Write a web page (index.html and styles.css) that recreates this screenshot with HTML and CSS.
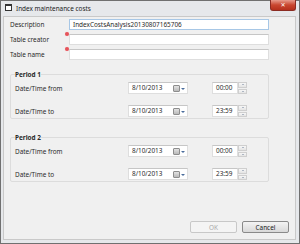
FILE: index.html
```html
<!DOCTYPE html>
<html lang="en">
<head>
    <meta charset="UTF-8">
    <title>Index maintenance costs</title>
    <link rel="stylesheet" href="styles.css">
</head>
<body>
    <div class="window">
        <div class="titlebar">
            <span class="app-icon"></span>
            <span class="title">Index maintenance costs</span>
            <span class="close">&#x2715;</span>
        </div>

        <div class="client">
            <div class="form">
                <span class="label">Description</span>
                <div class="field"><div class="text focus">IndexCostsAnalysis20130807165706</div></div>
                <span class="label">Table creator</span>
                <div class="field"><span class="req"></span><div class="text"></div></div>
                <span class="label">Table name</span>
                <div class="field"><span class="req"></span><div class="text"></div></div>
            </div>

            <fieldset class="period">
                <legend>Period 1</legend>
                <div class="dt-row">
                    <span class="label">Date/Time from</span>
                    <div class="date">8/10/2013<span class="cal"></span><span class="arrow"></span></div>
                    <div class="time">00:00</div>
                    <div class="spin"><span class="up"></span><span class="down"></span></div>
                </div>
                <div class="dt-row">
                    <span class="label">Date/Time to</span>
                    <div class="date">8/10/2013<span class="cal"></span><span class="arrow"></span></div>
                    <div class="time">23:59</div>
                    <div class="spin"><span class="up"></span><span class="down"></span></div>
                </div>
            </fieldset>

            <fieldset class="period">
                <legend>Period 2</legend>
                <div class="dt-row">
                    <span class="label">Date/Time from</span>
                    <div class="date">8/10/2013<span class="cal"></span><span class="arrow"></span></div>
                    <div class="time">00:00</div>
                    <div class="spin"><span class="up"></span><span class="down"></span></div>
                </div>
                <div class="dt-row">
                    <span class="label">Date/Time to</span>
                    <div class="date">8/10/2013<span class="cal"></span><span class="arrow"></span></div>
                    <div class="time">23:59</div>
                    <div class="spin"><span class="up"></span><span class="down"></span></div>
                </div>
            </fieldset>

            <div class="buttons">
                <button class="btn" disabled>OK</button>
                <button class="btn">Cancel</button>
            </div>
        </div>
    </div>
</body>
</html>
```

FILE: styles.css
```css
body {
    margin: 0;
    font-family: "Noto Sans", "DejaVu Sans", sans-serif;
    font-size: 6.4px;
    color: #2a2a2a;
}
.window {
    width: 300px;
    height: 244px;
    box-sizing: border-box;
    border: 1px solid #707070;
    background-color: #e6e8eb;
    padding: 0 3px 3px 2px;
    display: flex;
    flex-direction: column;
}
.titlebar {
    height: 15px;
    display: flex;
    align-items: flex-start;
}
.app-icon {
    width: 5px;
    height: 4px;
    margin: 3px 4px 0 2px;
    border: 1px solid #333;
    border-top-width: 2px;
    background-color: #fff;
}
.title {
    margin-top: 3px;
    line-height: 9px;
    color: #222;
}
.close {
    margin-left: auto;
    margin-top: -1px;
    width: 24px;
    height: 10px;
    border: 1px solid #8b2b22;
    border-top: none;
    border-radius: 0 0 3px 3px;
    background: linear-gradient(#e79b8c, #c9462f 50%, #b5301c);
    color: #fff;
    font-size: 6px;
    line-height: 10px;
    text-align: center;
    font-weight: bold;
}
.client {
    flex: 1;
    border: 1px solid #c9c9c9;
    background-color: #f0f0f0;
    display: flex;
    flex-direction: column;
}
.form {
    display: grid;
    grid-template-columns: 59px 200px;
    row-gap: 4px;
    padding: 2px 0 0 6px;
    align-items: center;
}
.field {
    position: relative;
}
.text, .date, .time {
    height: 11px;
    box-sizing: border-box;
    border: 1px solid #dedede;
    border-top-color: #c6c6c6;
    background-color: #fff;
    line-height: 9px;
    padding-left: 3px;
}
.text.focus {
    border-color: #a7c7e6;
}
.req {
    position: absolute;
    left: -4px;
    top: -2px;
    width: 4px;
    height: 4px;
    border-radius: 50%;
    background-color: #e5535a;
    box-shadow: 0 0 1px #f6b5b8;
}
.period {
    margin: 10px 26px 0 6px;
    padding: 3px 0 1px 4px;
    border: 1px solid #dcdcdc;
    border-radius: 2px;
    min-width: 0;
}
.period + .period {
    margin-top: 14px;
}
.period legend {
    padding: 0;
    font-weight: bold;
    line-height: 9px;
}
.dt-row {
    display: flex;
    align-items: center;
    height: 12px;
    margin-bottom: 11px;
}
.dt-row:last-child {
    margin-bottom: 0;
}
.dt-row .label {
    width: 113px;
}
.date {
    width: 60px;
    height: 12px;
    display: flex;
    align-items: center;
    line-height: 10px;
}
.cal {
    margin-left: auto;
    width: 5px;
    height: 5px;
    border: 1px solid #8d8d8d;
    border-radius: 1px;
    background: linear-gradient(#e2e2e2, #b9b9b9);
}
.arrow {
    margin: 1px 2px 0 1px;
    border-left: 2px solid transparent;
    border-right: 2px solid transparent;
    border-top: 2px solid #4a6d9c;
}
.time {
    width: 26px;
    height: 12px;
    margin-left: 24px;
    line-height: 10px;
}
.spin {
    width: 9px;
    height: 12px;
    display: flex;
    flex-direction: column;
    gap: 1px;
}
.spin span {
    flex: 1;
    border: 1px solid #cfcfcf;
    background: linear-gradient(#f7f7f7, #e4e4e4);
    display: flex;
    align-items: center;
    justify-content: center;
}
.spin .up::after {
    content: "";
    border-left: 1.5px solid transparent;
    border-right: 1.5px solid transparent;
    border-bottom: 1.5px solid #6d7f97;
}
.spin .down::after {
    content: "";
    border-left: 1.5px solid transparent;
    border-right: 1.5px solid transparent;
    border-top: 1.5px solid #6d7f97;
}
.buttons {
    margin-top: auto;
    display: flex;
    justify-content: flex-end;
    gap: 5px;
    padding: 0 6px 6px 0;
}
.btn {
    width: 47px;
    height: 12px;
    padding: 0;
    font-family: inherit;
    font-size: 6.4px;
    color: #222;
    border: 1px solid #8a8a8a;
    border-radius: 2px;
    background: linear-gradient(#f4f4f4, #e6e6e6 50%, #d9d9d9);
}
.btn:disabled {
    color: #a8a8a8;
    border-color: #c8c8c8;
    background: #f4f4f4;
}
```
